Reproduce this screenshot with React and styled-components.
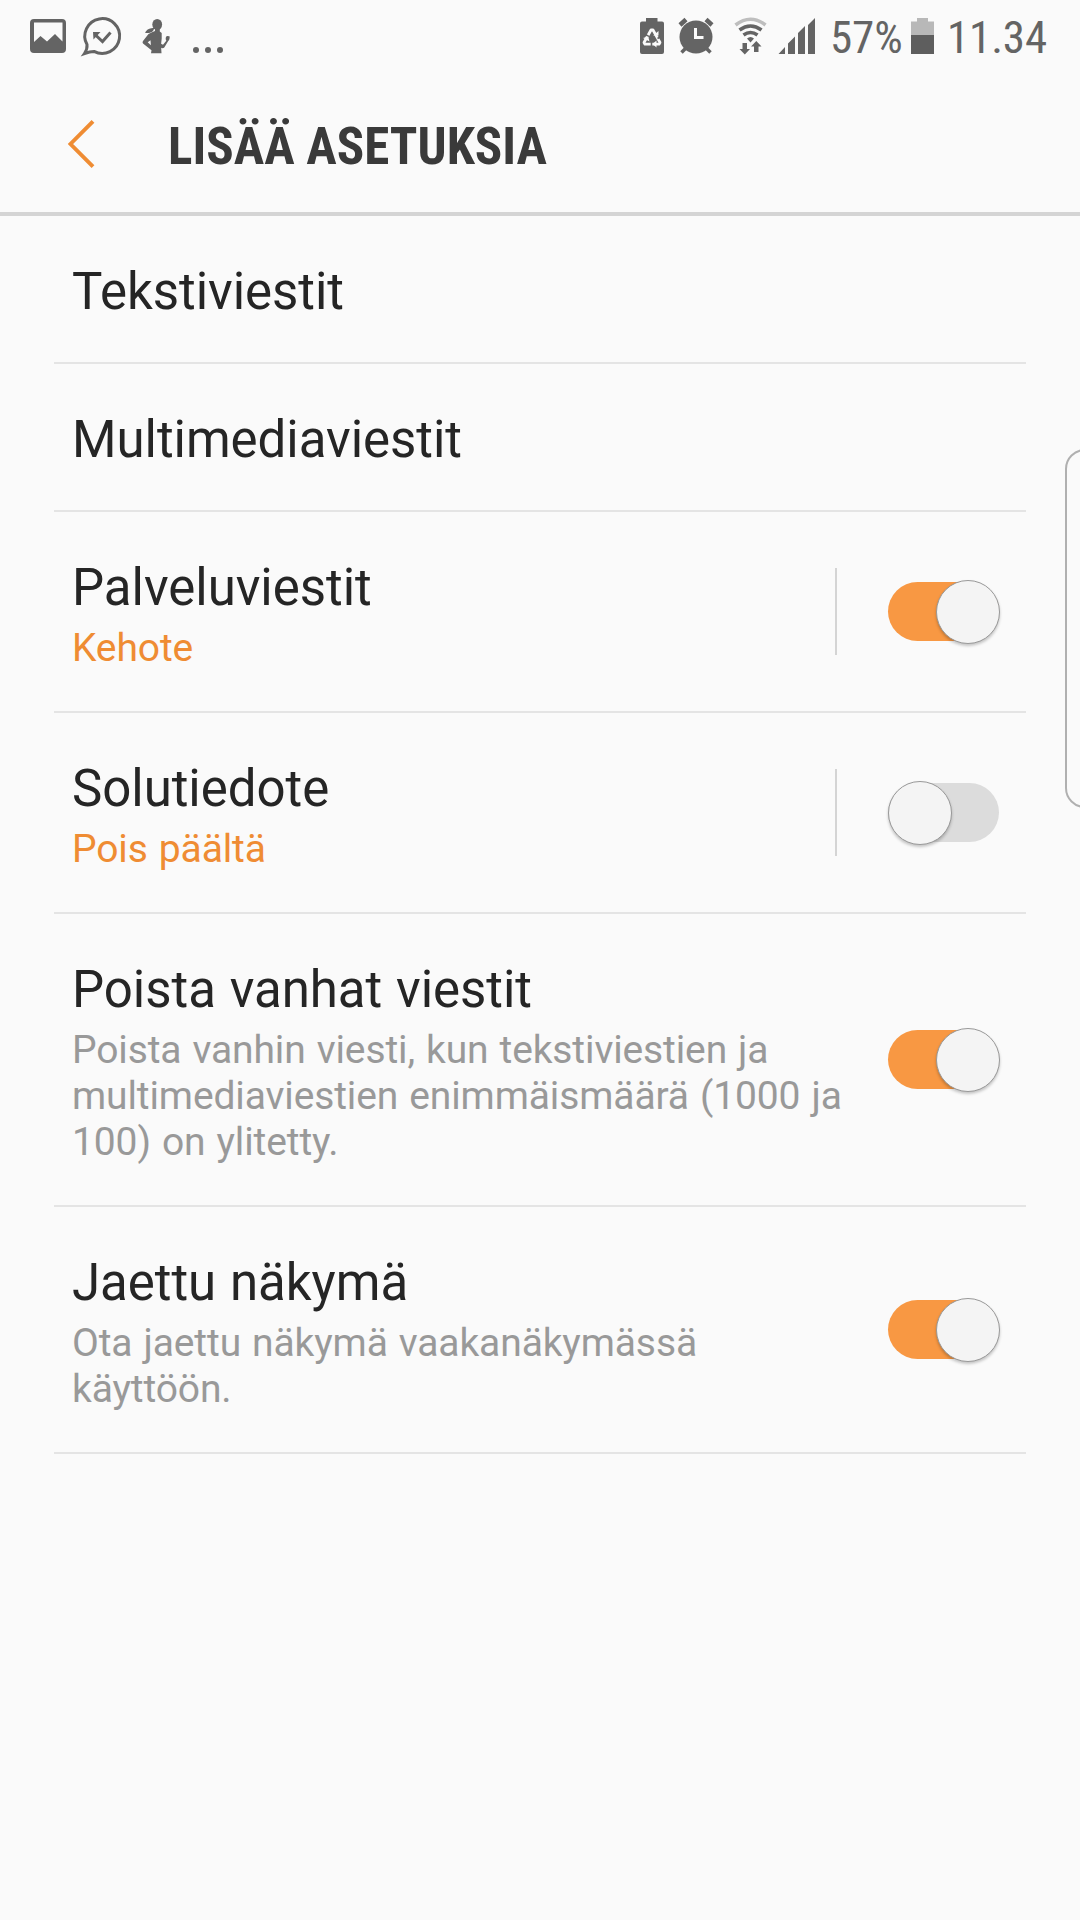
import React from 'react';
import styled, { createGlobalStyle } from 'styled-components';

const Global = createGlobalStyle`
  *, *::before, *::after { box-sizing: border-box; }
  body { margin: 0; background: #fafafa; }
`;

const Screen = styled.main`
  position: relative;
  width: 1080px;
  height: 1920px;
  overflow: hidden;
  background: #fafafa;
  font-family: Roboto, 'Liberation Sans', sans-serif;
`;

const StatusBar = styled.div`
  display: flex;
  justify-content: space-between;
  height: 72px;
`;

const IconStrip = styled.svg`
  display: block;
  flex: none;
  width: ${(p) => p.$width}px;
  height: 72px;
`;

const StatusGroup = styled.div`
  display: flex;
`;

const StatusText = styled.span`
  width: ${(p) => p.$width}px;
  padding-top: 11px;
  font-family: 'Roboto Condensed', Roboto, sans-serif;
  font-stretch: 75%;
  font-size: 45px;
  line-height: 53px;
  letter-spacing: -0.15px;
  color: #646464;
  white-space: nowrap;
`;

const Header = styled.header`
  display: flex;
  align-items: center;
  height: 144px;
  border-bottom: 4px solid #d4d4d4;
`;

const BackButton = styled.button`
  display: block;
  width: 168px;
  height: 140px;
  padding: 0;
  border: 0;
  background: none;
`;

const Title = styled.h1`
  margin: 9px 0 0;
  font-family: 'Roboto Condensed', Roboto, sans-serif;
  font-stretch: 75%;
  font-size: 51px;
  font-weight: 700;
  line-height: 60px;
  color: #3a3a3a;
  white-space: nowrap;
`;

const List = styled.ul`
  margin: 0;
  padding: 0 54px;
  list-style: none;
`;

const Row = styled.li`
  display: flex;
  align-items: center;
  padding: 46px 27px 40px 18px;
  border-bottom: 2px solid #e4e4e4;
`;

const Texts = styled.div`
  flex: 1;
`;

const Label = styled.div`
  font-size: 51px;
  line-height: 60px;
  letter-spacing: -0.04px;
  word-spacing: 1.2px;
  color: #252525;
`;

const Summary = styled.div`
  margin-top: 7px;
  font-size: 39px;
  line-height: 46px;
  letter-spacing: -0.12px;
  word-spacing: 1.5px;
  color: ${(p) => (p.$accent ? '#ef8c33' : '#999')};
  white-space: pre-line;
`;

const Separator = styled.div`
  width: 2px;
  height: 87px;
  margin: -6px 51px 0 0;
  background: #d4d4d4;
`;

const Track = styled.div`
  display: flex;
  align-items: center;
  justify-content: ${(p) => (p.$on ? 'flex-end' : 'flex-start')};
  width: 111px;
  height: 59px;
  margin-top: -6px;
  border-radius: 30px;
  background: ${(p) => (p.$on ? '#f89843' : '#dcdcdc')};
`;

const Thumb = styled.div`
  flex: none;
  width: 64px;
  height: 64px;
  margin-right: -1px;
  border: 1px solid #999;
  border-radius: 50%;
  background: #f4f4f4;
  box-shadow: 0 2px 3px rgba(0, 0, 0, 0.22);
`;

const EdgeHandle = styled.div`
  position: absolute;
  top: 449px;
  left: 1065px;
  width: 40px;
  height: 359px;
  border: 2px solid #b0b0b0;
  border-radius: 20px;
`;

const items = [
  { label: 'Tekstiviestit' },
  { label: 'Multimediaviestit' },
  { label: 'Palveluviestit', summary: 'Kehote', accent: true, on: true, split: true },
  { label: 'Solutiedote', summary: 'Pois päältä', accent: true, on: false, split: true },
  {
    label: 'Poista vanhat viestit',
    summary: 'Poista vanhin viesti, kun tekstiviestien ja\nmultimediaviestien enimmäismäärä (1000 ja\n100) on ylitetty.',
    on: true,
  },
  {
    label: 'Jaettu näkymä',
    summary: 'Ota jaettu näkymä vaakanäkymässä\nkäyttöön.',
    on: true,
  },
];

function NotificationIcons() {
  return (
    <IconStrip $width={260} viewBox="0 0 260 72" fill="#646464">
      <path fillRule="evenodd" d="M34 19h28q4 0 4 4v26q0 4-4 4H34q-4 0-4-4V23q0-4 4-4zM34 22.500V42l6.500-6 6.500 5.500 8-7.500 7.500 7.500V22.500z" />
      <path d="M84.500 53.500q3-4.500 2.500-9A17.400 17.400 0 1 1 94 51.400q-4 0-9.500 2.100z" fill="none" stroke="#646464" strokeWidth="3" />
      <path d="M95 34.500l7.500 7 8-9" fill="none" stroke="#646464" strokeWidth="3" />
      <path d="M93 32h7.500L93.500 39.500z" />
      {/* walking figure with a ponytail */}
      <ellipse cx="157.200" cy="24.500" rx="4.900" ry="5.500" />
      <path
        fillRule="evenodd"
        d="M155 27H159.800V31.500L161.700 33V38.500L161 45L161.500 53.300H151L151.500 50.300L143 43.500Q142 42.300 143 41L148.500 34L152 32.300L155 31ZM150.500 40.300L147.700 42.200L150.900 45.200Z"
      />
      <path d="M145 32.800C147 29 150 28 154.500 28L153 31C151 33.200 148 33.400 145 32.800Z" />
      <path d="M160.500 43.500L163 44.800L166.300 40.800C165.300 39 165.500 36.800 167 36L169.500 36.200C170 38 169.300 40 168.200 41L164.300 47.500C163.300 48.600 162 48.500 160.500 47.600Z" />
      <circle cx="196" cy="50" r="3" />
      <circle cx="208" cy="50" r="3" />
      <circle cx="220" cy="50" r="3" />
    </IconStrip>
  );
}

function SystemIcons() {
  return (
    <IconStrip $width={200} viewBox="630 0 200 72" fill="#646464">
      <path d="M646 18h11.500v3.500H662q2 0 2 2V52q0 2-2 2h-20q-2 0-2-2V23.500q0-2 2-2h4z" />
      {/* recycling arrows on the battery */}
      <path d="M651 30h2l7 12.500-1 1.700h-14l-1-1.700z" fill="none" stroke="#fafafa" strokeWidth="2.800" strokeLinejoin="round" />
      <path d="M645.500 34.500l4 2.400M657.500 38.500l4.500-2.500M651.500 42v5" stroke="#646464" strokeWidth="1.600" />
      <path d="M653.200 35.500h5.300v-4.500zM656.500 40.500v7l-4-3.500zM643 38l5.200-1.500 1.300 5z" fill="#fafafa" />
      <circle cx="696" cy="37" r="16.500" />
      <path d="M680 25l6-5.500M712 25l-6-5.500" stroke="#646464" strokeWidth="4.500" />
      <path d="M681.500 52.500l5-5M710.500 52.500l-5-5" stroke="#646464" strokeWidth="3.500" />
      <path d="M695.500 28v9.500h8" fill="none" stroke="#fafafa" strokeWidth="3" />
      <g fill="none" strokeWidth="3.600" stroke="#646464">
        <path d="M735.500 25q15-11.500 30 0" stroke="#bebebe" />
        <path d="M739.500 30q11-8 22 0" />
        <path d="M743.500 35q7-5 14 0" />
      </g>
      <path d="M747 38.500q3.500-3.200 7 0l-3.500 4zM742.500 43h4.500v6h3l-5.200 5.500L739.500 49h3zM754 52v-5.500h-3l5.300-5.500 5.200 5.500h-3V52zM778.500 54l6.500-7v7zM788 54V43.500l7-7V54zM798 54V33l7-7v28zM808 54V25l7-7v36z" />
    </IconStrip>
  );
}

export default function App() {
  return (
    <Screen>
      <Global />
      <StatusBar>
        <NotificationIcons />
        <StatusGroup>
          <SystemIcons />
          <StatusText $width={80}>57%</StatusText>
          <IconStrip $width={37} viewBox="910 0 37 72">
            <path d="M911 35V21.500h6V18h11v3.500h6V35z" fill="#b8b8b8" />
            <path d="M911 35h23v19h-23z" fill="#5e5e5e" />
          </IconStrip>
          <StatusText $width={133}>11.34</StatusText>
        </StatusGroup>
      </StatusBar>
      <Header>
        <BackButton aria-label="Takaisin">
          <svg width="168" height="140" viewBox="0 72 168 140" fill="none">
            <path d="M92.500 121.300L70 144l22.500 22.700" stroke="#ef8c33" strokeWidth="3.900" transform="translate(0.500 0)" />
          </svg>
        </BackButton>
        <Title>LISÄÄ ASETUKSIA</Title>
      </Header>
      <List>
        {items.map((item) => (
          <Row key={item.label}>
            <Texts>
              <Label>{item.label}</Label>
              {item.summary && <Summary $accent={item.accent}>{item.summary}</Summary>}
            </Texts>
            {item.split && <Separator />}
            {item.summary && (
              <Track $on={item.on} role="switch" aria-checked={item.on}>
                <Thumb />
              </Track>
            )}
          </Row>
        ))}
      </List>
      <EdgeHandle />
    </Screen>
  );
}
